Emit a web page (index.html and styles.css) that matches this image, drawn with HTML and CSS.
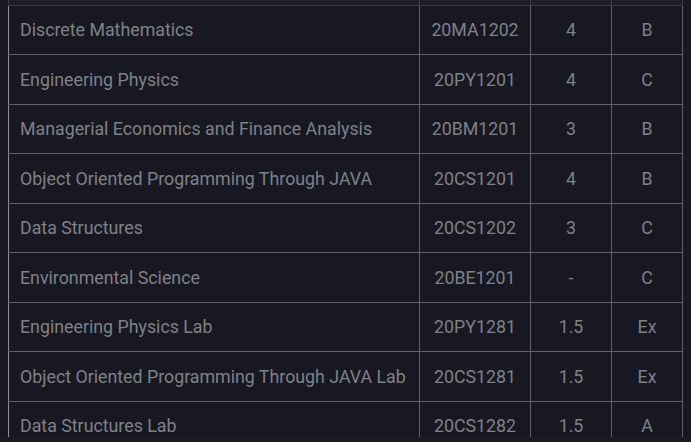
FILE: index.html
```html
<!DOCTYPE html>
<html>
<head>
    <meta charset="utf-8"/>
    <title>Results</title>
    <link rel="stylesheet" href="styles.css">
</head>
<body>
<div class="result-wrap">
    <table class="result-table">
        <thead>
        <tr>
            <th></th>
            <th></th>
            <th></th>
            <th></th>
        </tr>
        </thead>
        <tbody>
        <tr><td class="name">Discrete Mathematics</td><td>20MA1202</td><td>4</td><td>B</td></tr>
        <tr><td class="name">Engineering Physics</td><td>20PY1201</td><td>4</td><td>C</td></tr>
        <tr><td class="name">Managerial Economics and Finance Analysis</td><td>20BM1201</td><td>3</td><td>B</td></tr>
        <tr><td class="name">Object Oriented Programming Through JAVA</td><td>20CS1201</td><td>4</td><td>B</td></tr>
        <tr><td class="name">Data Structures</td><td>20CS1202</td><td>3</td><td>C</td></tr>
        <tr><td class="name">Environmental Science</td><td>20BE1201</td><td>-</td><td>C</td></tr>
        <tr><td class="name">Engineering Physics Lab</td><td>20PY1281</td><td>1.5</td><td>Ex</td></tr>
        <tr><td class="name">Object Oriented Programming Through JAVA Lab</td><td>20CS1281</td><td>1.5</td><td>Ex</td></tr>
        <tr><td class="name">Data Structures Lab</td><td>20CS1282</td><td>1.5</td><td>A</td></tr>
        </tbody>
    </table>
</div>
<div class="bottom-edge"></div>
</body>
</html>
```

FILE: styles.css
```css
html,
body {
    height: 100%;
    margin: 0;
    padding: 0;
    overflow: hidden;
    background: #171821;
}

.result-wrap {
    padding-left: 8px;
}

.result-table {
    width: 675px;
    border-collapse: collapse;
    table-layout: fixed;
    font-family: Roboto, "Liberation Sans", sans-serif;
    font-size: 17.8px;
    color: #7f8189;
}

.result-table th,
.result-table td {
    height: 48.5px;
    padding: 0;
    text-align: center;
    font-weight: normal;
    border: 1px solid #5f6168;
    white-space: nowrap;
}

.result-table th {
    height: 4.5px;
    background: #1d1f26;
    border-top: none;
    border-color: #3a3c43;
}

.result-table th:nth-child(1) { width: 410px; }
.result-table th:nth-child(2) { width: 110px; }
.result-table th:nth-child(3) { width: 80px; }
.result-table th:nth-child(4) { width: 70px; }

.result-table tr td:first-child {
    border-left-color: #8e9096;
}

.result-table td.name {
    text-align: left;
    padding-left: 11px;
}

.bottom-edge {
    position: fixed;
    bottom: 0;
    left: 0;
    right: 0;
    height: 5px;
    background: #1a1c21;
    z-index: 2;
}
```
